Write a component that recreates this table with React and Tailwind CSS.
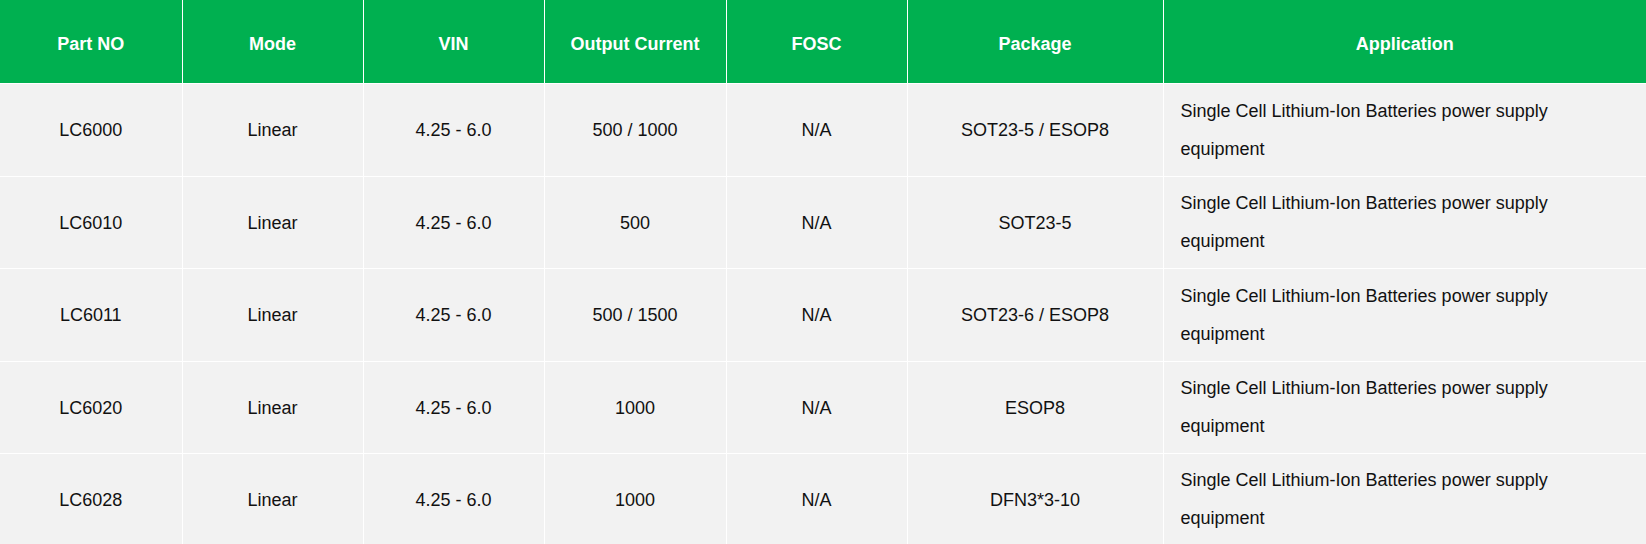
import React from "react";

const rows = [
  ["LC6000", "Linear", "4.25 - 6.0", "500 / 1000", "N/A", "SOT23-5 / ESOP8"],
  ["LC6010", "Linear", "4.25 - 6.0", "500", "N/A", "SOT23-5"],
  ["LC6011", "Linear", "4.25 - 6.0", "500 / 1500", "N/A", "SOT23-6 / ESOP8"],
  ["LC6020", "Linear", "4.25 - 6.0", "1000", "N/A", "ESOP8"],
  ["LC6028", "Linear", "4.25 - 6.0", "1000", "N/A", "DFN3*3-10"],
];

const rowHeights = ["h-[93px]", "h-[92px]", "h-[93px]", "h-[92px]", "h-[92px]"];

const headers = ["Part NO", "Mode", "VIN", "Output Current", "FOSC", "Package", "Application"];
const widths = [182, 181, 181, 182, 181, 256, 483];

export default function App() {
  return (
    <div className="w-[1646px] h-[544px] bg-white overflow-hidden" style={{ fontFamily: '"Liberation Sans", Arial, sans-serif' }}>
      <table className="w-full table-fixed border-collapse text-[18px]">
        <colgroup>
          {widths.map((w, i) => (
            <col key={i} style={{ width: w }} />
          ))}
        </colgroup>
        <thead>
          <tr className="h-[83px]">
            {headers.map((h, i) => (
              <th
                key={i}
                className={`bg-[#00b050] text-white font-bold text-center px-0 pt-[6px] pb-0 border-b border-white ${i < 6 ? "border-r" : ""}`}
              >
                {h}
              </th>
            ))}
          </tr>
        </thead>
        <tbody>
          {rows.map((r, ri) => (
            <tr key={ri} className={rowHeights[ri]}>
              {r.map((c, ci) => (
                <td
                  key={ci}
                  className={`bg-[#f2f2f2] text-[#111111] text-center px-0 pt-[2px] pb-0 border-white border-r ${ri < 4 ? "border-b" : ""}`}
                >
                  {c}
                </td>
              ))}
              <td className={`bg-[#f2f2f2] text-[#111111] text-left pl-[17px] pr-[40px] py-0 leading-[38px] border-white ${ri < 4 ? "border-b" : ""}`}>
                Single Cell Lithium-Ion Batteries power supply equipment
              </td>
            </tr>
          ))}
        </tbody>
      </table>
    </div>
  );
}
